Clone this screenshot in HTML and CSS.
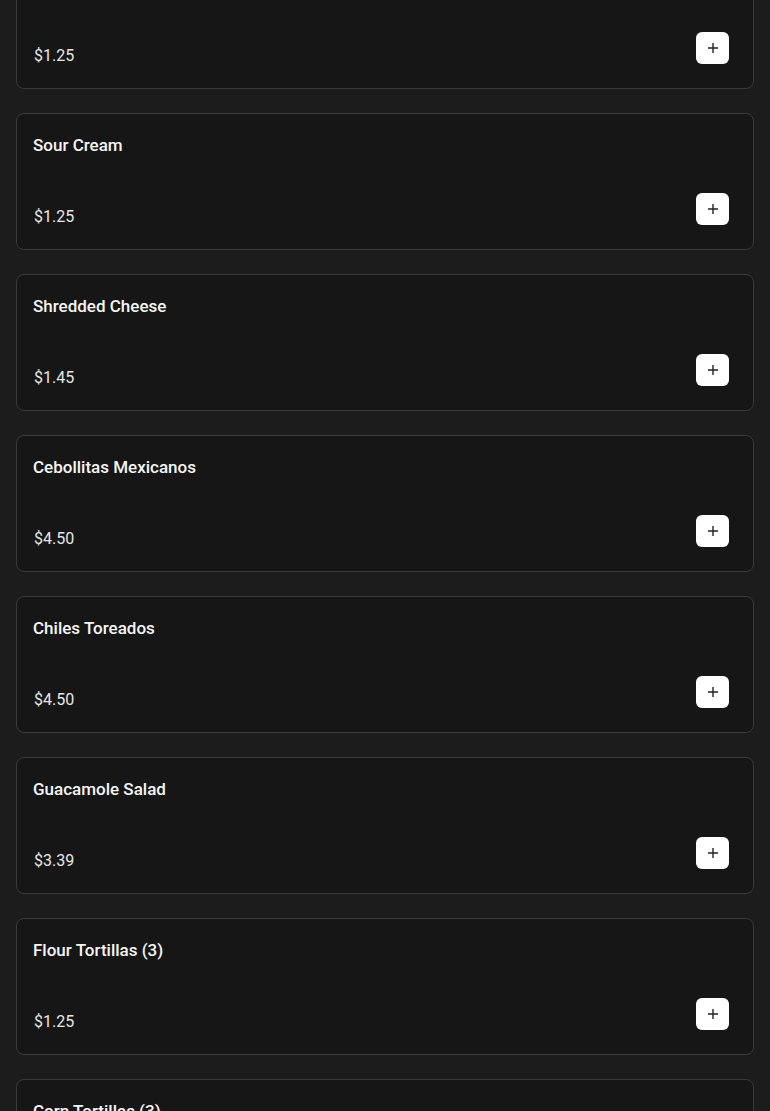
FILE: index.html
```html
<!DOCTYPE html>
<html lang="en">
<head>
    <meta charset="UTF-8">
    <meta name="viewport" content="width=device-width, initial-scale=1.0">
    <title>Sides</title>
    <link rel="stylesheet" href="styles.css">
</head>
<body>
    <div class="menu-list">
        <div class="menu-item">
            <div class="item-name">Salsa Verde</div>
            <div class="item-row">
                <span class="item-price">$1.25</span>
                <button class="add-btn" aria-label="Add"><svg width="10" height="10" viewBox="0 0 10 10"><path d="M5 0v10M0 5h10"/></svg></button>
            </div>
        </div>
        <div class="menu-item">
            <div class="item-name">Sour Cream</div>
            <div class="item-row">
                <span class="item-price">$1.25</span>
                <button class="add-btn" aria-label="Add"><svg width="10" height="10" viewBox="0 0 10 10"><path d="M5 0v10M0 5h10"/></svg></button>
            </div>
        </div>
        <div class="menu-item">
            <div class="item-name">Shredded Cheese</div>
            <div class="item-row">
                <span class="item-price">$1.45</span>
                <button class="add-btn" aria-label="Add"><svg width="10" height="10" viewBox="0 0 10 10"><path d="M5 0v10M0 5h10"/></svg></button>
            </div>
        </div>
        <div class="menu-item">
            <div class="item-name">Cebollitas Mexicanos</div>
            <div class="item-row">
                <span class="item-price">$4.50</span>
                <button class="add-btn" aria-label="Add"><svg width="10" height="10" viewBox="0 0 10 10"><path d="M5 0v10M0 5h10"/></svg></button>
            </div>
        </div>
        <div class="menu-item">
            <div class="item-name">Chiles Toreados</div>
            <div class="item-row">
                <span class="item-price">$4.50</span>
                <button class="add-btn" aria-label="Add"><svg width="10" height="10" viewBox="0 0 10 10"><path d="M5 0v10M0 5h10"/></svg></button>
            </div>
        </div>
        <div class="menu-item">
            <div class="item-name">Guacamole Salad</div>
            <div class="item-row">
                <span class="item-price">$3.39</span>
                <button class="add-btn" aria-label="Add"><svg width="10" height="10" viewBox="0 0 10 10"><path d="M5 0v10M0 5h10"/></svg></button>
            </div>
        </div>
        <div class="menu-item">
            <div class="item-name">Flour Tortillas (3)</div>
            <div class="item-row">
                <span class="item-price">$1.25</span>
                <button class="add-btn" aria-label="Add"><svg width="10" height="10" viewBox="0 0 10 10"><path d="M5 0v10M0 5h10"/></svg></button>
            </div>
        </div>
        <div class="menu-item">
            <div class="item-name">Corn Tortillas (3)</div>
            <div class="item-row">
                <span class="item-price">$1.25</span>
                <button class="add-btn" aria-label="Add"><svg width="10" height="10" viewBox="0 0 10 10"><path d="M5 0v10M0 5h10"/></svg></button>
            </div>
        </div>
    </div>
</body>
</html>
```

FILE: styles.css
```css
body {
    font-family: Roboto, "Liberation Sans", Arial, sans-serif;
    background-color: #1c1c1c;
    margin: 0;
    overflow: hidden;
}

.menu-list {
    display: flex;
    flex-direction: column;
    gap: 24px;
    padding: 0 16px;
    margin-top: -48px;
}

.menu-item {
    background-color: #161616;
    border: 1px solid #3a3a3a;
    border-radius: 8px;
    padding: 19px 24px 20px 16px;
}

.item-name {
    color: #f5f5f5;
    font-size: 17px;
    font-weight: 500;
    line-height: 24px;
    margin-bottom: 36px;
}

.item-row {
    display: flex;
    justify-content: space-between;
    align-items: flex-end;
}

.item-price {
    color: #e6e6e6;
    font-size: 16px;
    line-height: 24px;
    padding-left: 1px;
}

.add-btn {
    width: 33px;
    height: 32px;
    margin-bottom: 4px;
    padding: 0;
    border: none;
    border-radius: 6px;
    background-color: #ffffff;
    display: flex;
    align-items: center;
    justify-content: center;
    cursor: pointer;
}

.add-btn svg {
    stroke: #222;
    stroke-width: 1.4;
    fill: none;
}
```
